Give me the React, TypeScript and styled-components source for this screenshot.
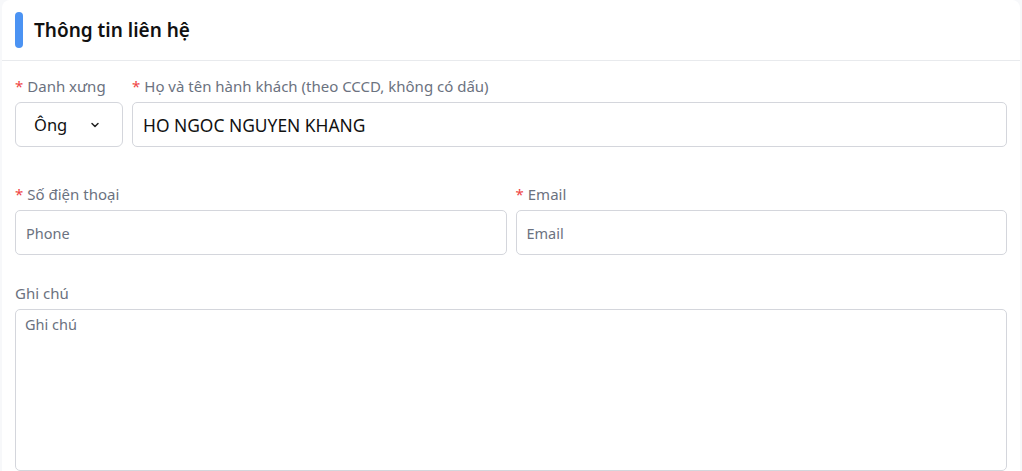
import * as React from 'react';
import styled, { createGlobalStyle } from 'styled-components';

/*!
 * Styles
 */

const GlobalStyle = createGlobalStyle`
  html, body {
    margin: 0;
    padding: 0;
    background: #f7f8fa;
    font-family: "Noto Sans", "Open Sans", Arial, sans-serif;
  }
`;

const Card = styled.section`
  margin: 0 2px;
  background: #fff;
  border-radius: 8px 8px 0 0;
  min-height: 471px;
`;

const Header = styled.header`
  display: flex;
  align-items: center;
  gap: 11px;
  height: 60px;
  padding: 0 13px;
  border-bottom: 1px solid #e8eaed;
`;

const Accent = styled.span`
  width: 8px;
  height: 36px;
  border-radius: 4px;
  background: #4b93f3;
`;

const Title = styled.h2`
  margin: 0;
  font-size: 19px;
  font-weight: 600;
  color: #111;
`;

const Body = styled.div`
  padding: 15px 13px 0;
`;

const Row = styled.div<{ $cols: string; $mb: number }>`
  display: grid;
  grid-template-columns: ${(p) => p.$cols};
  gap: 9px;
  margin-bottom: ${(p) => p.$mb}px;
`;

const Field = styled.div`
  display: flex;
  flex-direction: column;
  gap: 6px;
  min-width: 0;
`;

const Label = styled.label`
  font-size: 15px;
  line-height: 20px;
  color: #6b7280;
`;

const Req = styled.span`
  color: #ef4444;
  margin-right: 4px;
`;

const Input = styled.input`
  box-sizing: border-box;
  height: 45px;
  width: 100%;
  padding: 0 10px;
  border: 1px solid #d4d6dc;
  border-radius: 5px;
  font-family: inherit;
  font-size: ${(p) => (p.value ? '17.4px' : '14.5px')};
  color: #111;
  outline: none;

  &::placeholder {
    color: #6b7280;
  }
`;

const Select = styled.div`
  box-sizing: border-box;
  height: 45px;
  display: flex;
  align-items: center;
  justify-content: space-between;
  padding: 0 22px 0 18px;
  border: 1px solid #d4d6dc;
  border-radius: 6px;
  font-size: 16.5px;
  color: #111;
`;

const TextArea = styled.textarea`
  box-sizing: border-box;
  display: block;
  width: 100%;
  height: 162px;
  padding: 4px 9px;
  border: 1px solid #d4d6dc;
  border-radius: 5px;
  font-family: inherit;
  font-size: 14.5px;
  resize: none;
  outline: none;

  &::placeholder {
    color: #6b7280;
  }
`;

const Chevron = () => (
  <svg width="10" height="10" viewBox="0 0 10 10" fill="none">
    <path d="M2 3.5 L5 6.5 L8 3.5" stroke="#222" strokeWidth="1.5" strokeLinecap="round" strokeLinejoin="round" />
  </svg>
);

/*!
 * Expo
 */

export default function App() {
  return (
    <>
      <GlobalStyle />
      <Card>
        <Header>
          <Accent />
          <Title>Thông tin liên hệ</Title>
        </Header>
        <Body>
          <Row $cols="108px 1fr" $mb={37}>
            <Field>
              <Label><Req>*</Req>Danh xưng</Label>
              <Select>
                Ông
                <Chevron />
              </Select>
            </Field>
            <Field>
              <Label><Req>*</Req>Họ và tên hành khách (theo CCCD, không có dấu)</Label>
              <Input value="HO NGOC NGUYEN KHANG" readOnly />
            </Field>
          </Row>
          <Row $cols="1fr 1fr" $mb={28}>
            <Field>
              <Label><Req>*</Req>Số điện thoại</Label>
              <Input placeholder="Phone" />
            </Field>
            <Field>
              <Label><Req>*</Req>Email</Label>
              <Input placeholder="Email" />
            </Field>
          </Row>
          <Row $cols="1fr" $mb={0}>
            <Field>
              <Label>Ghi chú</Label>
              <TextArea placeholder="Ghi chú" />
            </Field>
          </Row>
        </Body>
      </Card>
    </>
  );
}
